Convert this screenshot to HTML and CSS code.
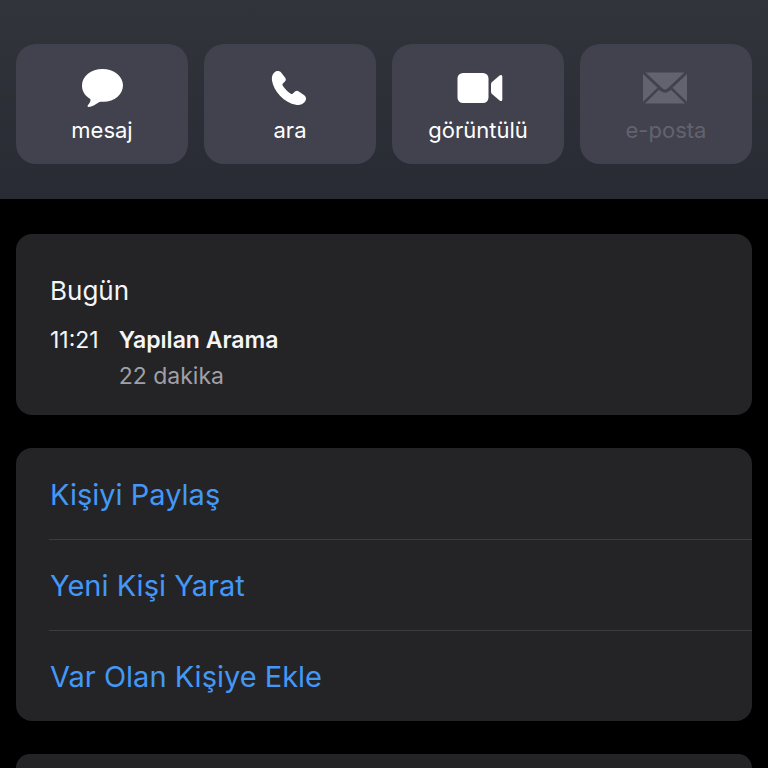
FILE: index.html
```html
<!DOCTYPE html>
<html lang="tr">
<head>
    <meta charset="UTF-8">
    <meta name="viewport" content="width=device-width, initial-scale=1.0">
    <title>Kişi</title>
    <link rel="stylesheet" href="styles.css">
</head>
<body>
    <div class="container">
        <header class="actions">
            <button class="action" type="button">
                <svg class="icon" viewBox="0 0 48 40" aria-hidden="true">
                    <path d="M24.500 1C36 1 45 8.200 45 17.300S36.500 33.800 25.500 33.800C23.500 33.800 22 33.800 20.500 34.500C17.500 36.500 14 38.900 10.700 39C9.300 39 9.200 37.800 10.200 36.800C11.600 35.300 12.700 33.500 12.500 31.600C12.400 30.900 11.700 30.500 10.800 29.900C6.500 27 4 22.600 4 17.400C4 8.200 13 1 24.500 1Z"/>
                </svg>
                <span>mesaj</span>
            </button>
            <button class="action" type="button">
                <svg class="icon" viewBox="0 0 48 40" aria-hidden="true">
                    <path d="M8.400 4.400C10.500 2.500 13.500 2.400 15.100 4.500L19.200 9.800C20.100 11.100 20 12.500 18.900 13.600L16.900 15.600C16.300 16.300 16.300 16.900 16.800 17.700C18.700 20.600 22 24 24.800 25.800C25.600 26.300 26.200 26.200 26.900 25.600L29 23.600C30.100 22.600 31.500 22.500 32.800 23.400L38.300 27.300C40.500 28.900 40.700 32 38.700 34.100C36.400 36.600 33.400 37.400 29.800 36.700C24.400 35.700 18.700 32.400 14.200 27.900C9.700 23.400 6.800 17.700 6 12.500C5.500 9 6.200 6.400 8.400 4.400Z"/>
                </svg>
                <span>ara</span>
            </button>
            <button class="action" type="button">
                <svg class="icon" viewBox="0 0 48 40" aria-hidden="true">
                    <rect x="3.500" y="5" width="31" height="30" rx="5.500"/>
                    <path d="M37 16.500C37 15.300 37.400 14.500 38.300 13.700L45.600 7.500C46.800 6.500 48.300 7 48.300 8.600V31.400C48.300 33 46.800 33.500 45.600 32.500L38.300 26.300C37.400 25.500 37 24.700 37 23.500Z"/>
                </svg>
                <span>görüntülü</span>
            </button>
            <button class="action" type="button" disabled>
                <svg class="icon" viewBox="0 0 48 40" aria-hidden="true">
                    <path d="M3.500 4.500H42.500L25.400 20.500Q23 22.500 20.600 20.500Z"/>
                    <path d="M1 6L15.500 19.800L1 33.800Z"/>
                    <path d="M45 6L30.500 19.800L45 33.800Z"/>
                    <path d="M3 35.500L16.900 21.700L18.900 23.300Q23 26.200 27.100 23.300L29.100 21.700L43 35.500Z"/>
                </svg>
                <span>e-posta</span>
            </button>
        </header>

        <main class="content">
            <section class="card calls">
                <h2 class="day">Bugün</h2>
                <div class="call">
                    <time class="time">11:21</time>
                    <div class="info">
                        <p class="type">Yapılan Arama</p>
                        <p class="duration">22 dakika</p>
                    </div>
                </div>
            </section>

            <section class="card options">
                <button class="option" type="button"><span>Kişiyi Paylaş</span></button>
                <button class="option" type="button"><span>Yeni Kişi Yarat</span></button>
                <button class="option" type="button"><span>Var Olan Kişiye Ekle</span></button>
            </section>

            <section class="card more"></section>
        </main>
    </div>
</body>
</html>
```
FILE: styles.css
```css
*{
    box-sizing: border-box;
    margin: 0;
    padding: 0;
}
body{
    font-family: Inter, "Liberation Sans", sans-serif;
    background-color: #000;
    color: #f5f5f7;
}
button{
    font-family: inherit;
    border: none;
    cursor: pointer;
}
.container{
    min-height: 100vh;
    display: flex;
    flex-direction: column;
}

/* top buttons */
.actions{
    display: grid;
    grid-template-columns: repeat(4, 1fr);
    gap: 16px;
    padding: 44px 16px 35px;
    background: linear-gradient(#31343b, #292b34);
}
.action{
    display: flex;
    flex-direction: column;
    align-items: center;
    gap: 8px;
    padding: 24px 0 20px;
    border-radius: 20px;
    background-color: #41424e;
    color: #fff;
    font-size: 22px;
    line-height: 28px;
}
.action:disabled{
    color: #62636f;
    cursor: default;
}
.icon{
    width: 48px;
    height: 40px;
    fill: currentColor;
    overflow: visible;
}

/* cards */
.content{
    flex: 1;
    display: flex;
    flex-direction: column;
    gap: 33px;
    padding: 35px 16px 0;
}
.card{
    border-radius: 16px;
    background-color: #242426;
}
.calls{
    padding: 40px 34px 21px;
}
.day{
    font-size: 26px;
    font-weight: 400;
    line-height: 34px;
}
.call{
    display: flex;
    gap: 20px;
    margin-top: 14px;
    font-size: 23px;
    line-height: 36px;
}
.type{
    font-weight: 600;
}
.duration{
    color: #a0a0a6;
}

.option{
    display: block;
    width: 100%;
    padding-left: 33px;
    background: none;
    color: #4398f7;
    font-size: 29px;
    line-height: 88px;
    text-align: left;
}
.option span{
    display: block;
    padding: 2px 0 0 1px;
    border-top: 1px solid transparent;
}
.option + .option span{
    border-top-color: #3d3d40;
}

.more{
    flex: 1;
    border-radius: 16px 16px 0 0;
}
```
